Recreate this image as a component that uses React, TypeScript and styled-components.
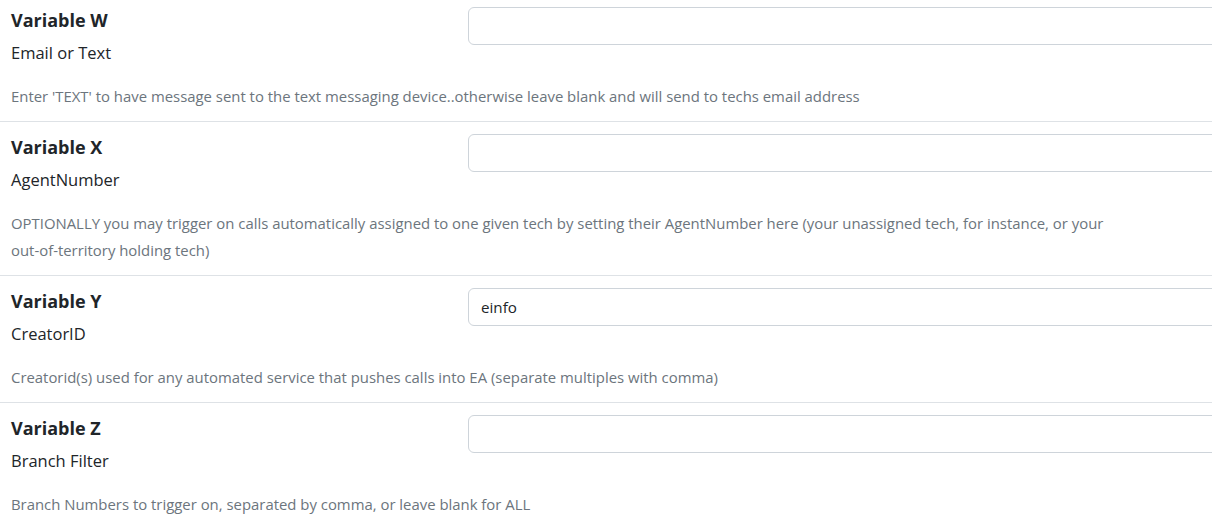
import React from "react";
import styled, { createGlobalStyle } from "styled-components";

const GlobalStyle = createGlobalStyle`
  html, body {
    margin: 0;
    background: #fff;
    overflow: hidden;
  }
  body {
    font-family: "Open Sans", "Noto Sans", sans-serif;
    color: #212529;
  }
`;

const Page = styled.div`
  width: 1400px;
  margin-top: -5px;
`;

const Section = styled.div`
  display: grid;
  grid-template-columns: 457px 1fr;
  padding: 12px 0 11px 11px;
  border-bottom: 1px solid #dee2e6;
`;

const Label = styled.div`
  display: flex;
  flex-direction: column;
  gap: 7px;
`;

const Title = styled.div`
  font-size: 18px;
  font-weight: 700;
  line-height: 26px;
`;

const Name = styled.div`
  font-size: 16.5px;
  line-height: 26px;
`;

const Input = styled.input`
  box-sizing: border-box;
  width: 100%;
  height: 38px;
  padding: 0 12px;
  border: 1px solid #ced4da;
  border-radius: 6px;
  font-family: inherit;
  font-size: 15.2px;
  color: #212529;
  background: #fff;
  outline: none;
`;

const Help = styled.div`
  grid-column: 1 / -1;
  margin-top: 17px;
  max-width: 1115px;
  font-size: 14.9px;
  line-height: 27px;
  color: #6c757d;
`;

type Field = { title: string; name: string; value: string; help: string };

const fields: Field[] = [
  {
    title: "Variable W",
    name: "Email or Text",
    value: "",
    help: "Enter 'TEXT' to have message sent to the text messaging device..otherwise leave blank and will send to techs email address",
  },
  {
    title: "Variable X",
    name: "AgentNumber",
    value: "",
    help: "OPTIONALLY you may trigger on calls automatically assigned to one given tech by setting their AgentNumber here (your unassigned tech, for instance, or your out-of-territory holding tech)",
  },
  {
    title: "Variable Y",
    name: "CreatorID",
    value: "einfo",
    help: "Creatorid(s) used for any automated service that pushes calls into EA (separate multiples with comma)",
  },
  {
    title: "Variable Z",
    name: "Branch Filter",
    value: "",
    help: "Branch Numbers to trigger on, separated by comma, or leave blank for ALL",
  },
];

export default function App() {
  return (
    <>
      <GlobalStyle />
      <Page>
        {fields.map((f) => (
          <Section key={f.title}>
            <Label>
              <Title>{f.title}</Title>
              <Name>{f.name}</Name>
            </Label>
            <Input type="text" defaultValue={f.value} />
            <Help>{f.help}</Help>
          </Section>
        ))}
      </Page>
    </>
  );
}
